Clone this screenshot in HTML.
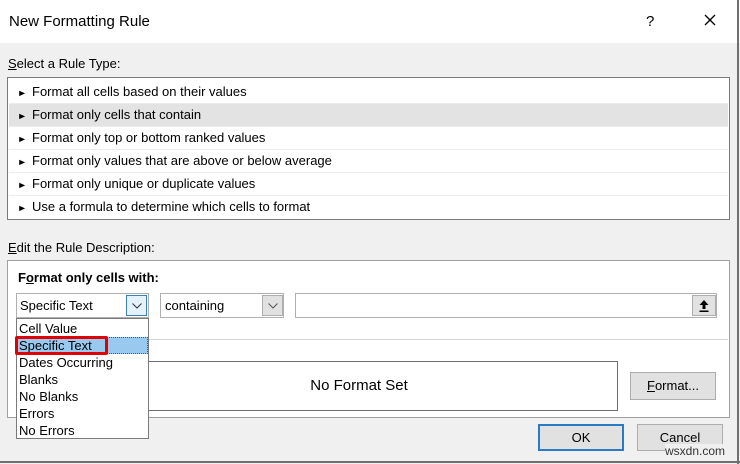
<!DOCTYPE html><html><head><style>
body{margin:0;width:740px;height:464px;background:#f0f0f0;font-family:"Liberation Sans",sans-serif;font-size:13px;color:#000;position:relative;overflow:hidden}
div,span,svg{position:absolute;box-sizing:border-box}
.t{white-space:nowrap}
.row{left:1px;right:1px;height:23px;border-bottom:1px solid #ececec;padding-left:9px;line-height:22px;white-space:nowrap}
.row b{font-weight:normal;font-size:9px;display:inline-block;width:14px;transform:scaleX(1.1)}
.btn{background:#e1e1e1;border:1px solid #adadad;text-align:center}
</style></head><body>
<div style="left:0;top:0;width:740px;height:43px;background:#fff"></div>
<div class="t" style="left:9px;top:13px;font-size:15px">New Formatting Rule</div>
<div class="t" style="left:646px;top:13px;font-size:15px">?</div>
<svg style="left:704px;top:14px" width="12" height="12"><path d="M1 1L11 11M11 1L1 11" stroke="#000" stroke-width="1.3"/></svg>
<div style="right:1px;top:0;width:2px;height:464px;background:#707070"></div>
<div style="left:0;bottom:1px;width:740px;height:2px;background:#707070"></div>
<div class="t" style="left:8px;top:56px"><u>S</u>elect a Rule Type:</div>
<div style="left:7px;top:77px;width:723px;height:143px;background:#fff;border:1px solid #7a7a7a">
<div class="row" style="top:3px"><b>►</b>Format all cells based on their values</div>
<div class="row" style="top:26px;background:#e3e3e3"><b>►</b>Format only cells that contain</div>
<div class="row" style="top:49px"><b>►</b>Format only top or bottom ranked values</div>
<div class="row" style="top:72px"><b>►</b>Format only values that are above or below average</div>
<div class="row" style="top:95px"><b>►</b>Format only unique or duplicate values</div>
<div class="row" style="top:118px;border:0"><b>►</b>Use a formula to determine which cells to format</div>
</div>
<div class="t" style="left:8px;top:240px"><u>E</u>dit the Rule Description:</div>
<div style="left:7px;top:260px;width:723px;height:158px;background:#fff;border:1px solid #a0a0a0"></div>
<div class="t" style="left:18px;top:270px;font-weight:bold">F<u>o</u>rmat only cells with:</div>
<div style="left:16px;top:293px;width:133px;height:25px;border:1px solid #b0b0b0;background:#fff"><span class="t" style="left:3px;top:4px">Specific Text</span>
<span style="left:109px;top:1px;width:21px;height:21px;border:1px solid #3c7fb1;background:#e5f1fb"><svg style="left:5px;top:7px" width="10" height="6"><path d="M0.5 0.5L5 5L9.5 0.5" fill="none" stroke="#333"/></svg></span></div>
<div style="left:160px;top:293px;width:124px;height:25px;border:1px solid #b0b0b0;background:#fff"><span class="t" style="left:4px;top:4px">containing</span>
<span style="left:101px;top:1px;width:21px;height:21px;border:1px solid #adadad;background:#e1e1e1"><svg style="left:5px;top:7px" width="10" height="6"><path d="M0.5 0.5L5 5L9.5 0.5" fill="none" stroke="#555"/></svg></span></div>
<div style="left:295px;top:293px;width:422px;height:25px;border:1px solid #b0b0b0;background:#fff">
<span style="left:396px;top:1px;width:24px;height:21px;border:1px solid #adadad;background:#e1e1e1"><svg style="left:5px;top:3px" width="12" height="14"><path d="M6 1L1.5 6H4.5V10H7.5V6H10.5Z" fill="#000"/><rect x="1.5" y="11.5" width="9" height="1.5" fill="#000"/></svg></span></div>
<div style="left:148px;top:339px;width:580px;height:1px;background:#d5d5d5"></div>
<div style="left:100px;top:361px;width:518px;height:50px;border:1px solid #6e6e6e;background:#fff;text-align:center;line-height:48px;font-size:15px">No Format Set</div>
<div class="btn" style="left:630px;top:372px;width:86px;height:28px;line-height:26px"><u>F</u>ormat...</div>
<div style="left:16px;top:318px;width:133px;height:121px;border:1px solid #7a7a7a;background:#fff;line-height:17px">
<span class="t" style="left:2px;top:1px">Cell Value</span>
<span style="left:0;top:18px;width:131px;height:17px;background:#99c9ef;border:1px dotted #555"></span>
<span class="t" style="left:2px;top:18px">Specific Text</span>
<span class="t" style="left:2px;top:35px">Dates Occurring</span>
<span class="t" style="left:2px;top:52px">Blanks</span>
<span class="t" style="left:2px;top:69px">No Blanks</span>
<span class="t" style="left:2px;top:86px">Errors</span>
<span class="t" style="left:2px;top:103px">No Errors</span>
</div>
<div style="left:15px;top:336px;width:93px;height:19px;border:3px solid #e00000;border-radius:2px"></div>
<div class="btn" style="left:538px;top:424px;width:86px;height:27px;border:2px solid #2a7bc4;line-height:23px">OK</div>
<div class="btn" style="left:637px;top:424px;width:86px;height:27px;line-height:25px">Cancel</div>
<div class="t" style="left:665px;top:444px;font-size:12px;color:#333;background:#f0f0f0;line-height:14px">wsxdn.com</div>
</body></html>
